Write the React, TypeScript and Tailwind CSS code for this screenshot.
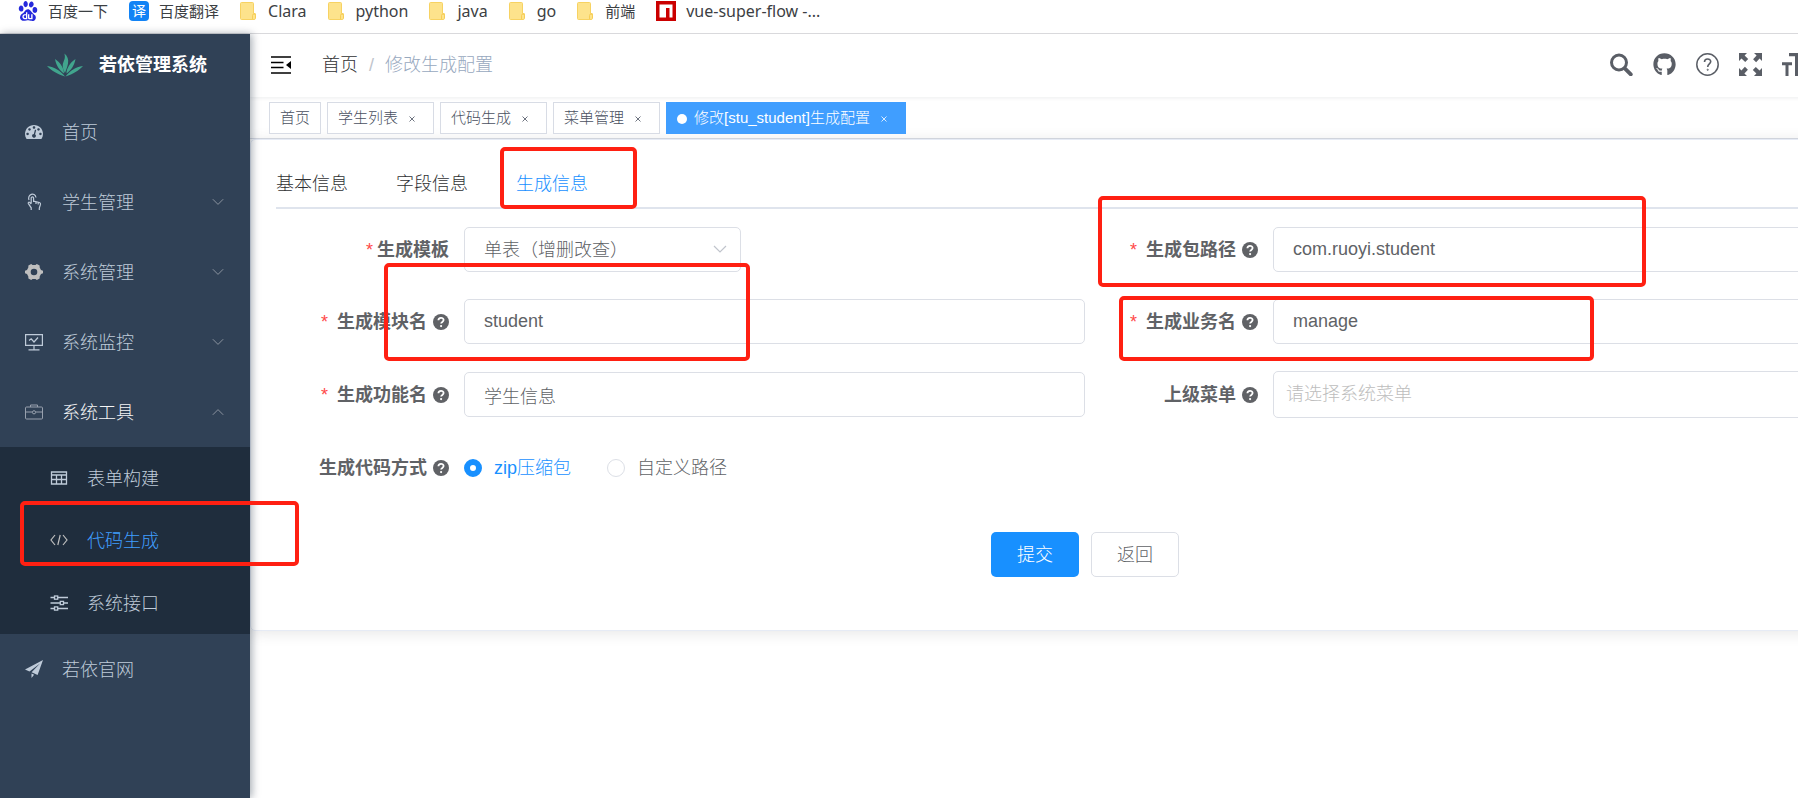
import { useState } from "react";
import type { ReactNode } from "react";
import { FaGithub } from "react-icons/fa";
import { SiBaidu } from "react-icons/si";

type IconProps = { className?: string };

const bookmarks = [
  { name: "百度一下", icon: "baidu" },
  { name: "百度翻译", icon: "fanyi" },
  { name: "Clara", icon: "folder" },
  { name: "python", icon: "folder" },
  { name: "java", icon: "folder" },
  { name: "go", icon: "folder" },
  { name: "前端", icon: "folder" },
  { name: "vue-super-flow -...", icon: "npm" },
];

const tags = ["首页", "学生列表", "代码生成", "菜单管理", "修改[stu_student]生成配置"];

const BookmarkIcon = ({ type }: { type: string }) => {
  if (type === "baidu") {
    return <SiBaidu className="h-5 w-5 text-[#2529dc]" />;
  }
  if (type === "fanyi") {
    return (
      <span className="flex h-5 w-5 items-center justify-center rounded-sm bg-[#1283f5] text-sm leading-none text-white">译</span>
    );
  }
  if (type === "npm") {
    return (
      <svg viewBox="0 0 20 20" className="h-5 w-5">
        <path fill="#cb0000" d="M0 0h20v20H0z" />
        <path fill="#fff" d="M3.500 3.500h13v13h-3V7h-3.500v9.500H3.500z" />
      </svg>
    );
  }
  return (
    <svg viewBox="0 0 18 18" className="h-[18px] w-[18px]">
      <path fill="#fde38c" stroke="#f7d262" d="M1.500.5h11a1 1 0 0 1 1 1v10h1.500a.5.5 0 0 1 .5.5v4a1.500 1.500 0 0 1-1.500 1.500H1.500a1 1 0 0 1-1-1v-15a1 1 0 0 1 1-1z" />
      <path fill="#fde38c" stroke="#f7cd55" d="M12.500 17v-3.500a1.500 1.500 0 0 1 3 0V16" />
    </svg>
  );
};

const Lotus = () => (
  <svg viewBox="0 0 36 24" className="h-6 w-9" fill="#41a58d">
    <path d="M18 20c-2.500-4-3.200-8-1.200-12C18.300 5 18 3 17.400.500 20.500 3 21.800 6.500 21 10.500 20.400 14 19 17 18 20z" />
    <path d="M17 20.500c0-5-3.500-11-9-14.500 1 6 4.500 11.500 9 14.500zM19.500 20.500c0-5 3.500-11 9-14.500-1 6-4.500 11.500-9 14.500z" />
    <path d="M18 23.500C13 17.500 8 14 0 13c4.500 4.500 10 8 18 10.500zM18.500 23.500c5-6 9.500-9.500 17.500-10.500-4.500 4.500-9.500 8-17.500 10.500z" />
  </svg>
);

const DashboardIcon = ({ className }: IconProps) => (
  <svg viewBox="0 0 128 100" className={className} fill="currentColor">
    <path d="M27.429 63.638c0-2.508-.893-4.654-2.679-6.440-1.786-1.786-3.930-2.680-6.428-2.680s-4.642.894-6.428 2.680-2.679 3.932-2.679 6.440c0 2.509.893 4.655 2.679 6.440 1.786 1.787 3.930 2.680 6.428 2.680s4.642-.893 6.428-2.680 2.679-3.931 2.679-6.440zm13.714-31.801c0-2.508-.893-4.654-2.679-6.440s-3.930-2.680-6.428-2.680-4.642.894-6.428 2.680-2.679 3.932-2.679 6.440c0 2.509.893 4.655 2.679 6.440 1.786 1.787 3.930 2.680 6.428 2.680s4.642-.893 6.428-2.680 2.679-3.931 2.679-6.440zM71.714 65.980l7.215-27.116c.285-1.230.107-2.378-.536-3.443-.643-1.064-1.560-1.762-2.750-2.094s-2.333-.177-3.429.462-1.810 1.573-2.143 2.804l-7.214 27.116c-2.857.237-5.405 1.266-7.643 3.088-2.238 1.822-3.738 4.152-4.500 6.992-.952 3.644-.476 7.098 1.429 10.364 1.905 3.265 4.690 5.370 8.357 6.317s7.143.474 10.429-1.420 5.404-4.660 6.357-8.306c.762-2.840.619-5.607-.429-8.305-1.047-2.697-2.762-4.850-5.143-6.460zm47.143-2.342c0-2.508-.893-4.654-2.679-6.440s-3.930-2.680-6.428-2.680-4.642.894-6.428 2.680-2.679 3.932-2.679 6.440c0 2.509.893 4.655 2.679 6.440 1.786 1.787 3.930 2.680 6.428 2.680s4.642-.893 6.428-2.680 2.679-3.931 2.679-6.440zM73.143 18.180c0-2.508-.893-4.654-2.679-6.440S66.534 9.060 64.036 9.060s-4.642.894-6.428 2.680-2.679 3.932-2.679 6.440.893 4.655 2.679 6.440c1.786 1.787 3.930 2.680 6.428 2.680s4.642-.893 6.428-2.680 2.679-3.931 2.679-6.440zm32 13.657c0-2.508-.893-4.654-2.679-6.440s-3.930-2.680-6.428-2.680-4.642.894-6.428 2.680-2.679 3.932-2.679 6.440c0 2.509.893 4.655 2.679 6.440 1.786 1.787 3.930 2.680 6.428 2.680s4.642-.893 6.428-2.680 2.679-3.931 2.679-6.440zM128 63.638c0 12.351-3.357 23.780-10.072 34.290C117.024 99.310 115.738 100 114.071 100H13.929c-1.667 0-2.953-.69-3.858-2.072C3.357 87.465 0 76.036 0 63.638c0-8.620 1.690-16.855 5.071-24.704S13 24.270 18.750 18.550s12.500-10.400 20.250-13.800S55.333 0 64 0s17.250 1.350 25 4.750 14.500 8.080 20.250 13.800 10.298 12.535 13.679 20.384S128 55.018 128 63.638z" />
  </svg>
);

const TouchIcon = ({ className }: IconProps) => (
  <svg viewBox="0 0 18 18" className={className} fill="none" stroke="currentColor" strokeWidth="1.200">
    <path d="M4 7C1.800 1.500 9.800-1.500 11 4.500M6.200 10.500V5c0-1.600 2.400-1.600 2.400 0v4M6.200 11 4.700 9.400c-.9-.7-1.900.2-1.300 1.200l2.800 4.200V17M8.600 8.200l5.800 1.300c.9.300 1.300.9 1.100 1.900l-1.200 3.600v2M11 9v2M13.200 9.500v2" />
  </svg>
);

const GearIcon = ({ className }: IconProps) => (
  <svg viewBox="0 0 18 17" className={className} fill="#bfbfbf">
    <path fillRule="evenodd" d="M6.200.5 7.500 1.500h3L11.800.5 14.600 2l.1 2L16 6.400l2 .8v2.600l-2 .8-1.300 2.400-.1 2-2.800 1.500-1.300-1h-3l-1.300 1L3.400 15l-.1-2L2 10.600 0 9.800V7.200l2-.8L3.300 4l.1-2zM9 5.200a3.300 3.300 0 1 0 0 6.600 3.300 3.300 0 0 0 0-6.600z" />
  </svg>
);

const MonitorIcon = ({ className }: IconProps) => (
  <svg viewBox="0 0 18 18" className={className} fill="none" stroke="currentColor" strokeWidth="1.200">
    <path d="M.6 1.600h16.800v10.800H.6zM9 12.400v4.200M3.500 16.800h11M4 7.500l2.200-1.700L9 9l4-4.500" />
  </svg>
);

const ToolIcon = ({ className }: IconProps) => (
  <svg viewBox="0 0 18 18" className={className} fill="none" stroke="#98a1ae" strokeWidth="1">
    <rect x=".5" y="4" width="17" height="12" rx="1" />
    <path d="M5.500 4V2h7v2M.5 9h6.700M10.800 9h6.700" />
    <circle cx="9" cy="9.300" r="1.600" />
  </svg>
);

const BuildIcon = ({ className }: IconProps) => (
  <svg viewBox="0 0 18 18" className={className} fill="none" stroke="currentColor" strokeWidth="1.300">
    <path d="M1.500 3h15v12h-15zM1.500 6h15M1.500 10.500h15M6.500 6v9M11.500 6v9" />
  </svg>
);

const CodeIcon = ({ className }: IconProps) => (
  <svg viewBox="0 0 18 18" className={className} fill="none" stroke="#bfbfbf" strokeWidth="1.200">
    <path d="M5 4 1 9l4 5M13 4l4 5-4 5M10.200 4 7.800 14" />
  </svg>
);

const SwaggerIcon = ({ className }: IconProps) => (
  <svg viewBox="0 0 18 18" className={className} fill="none" stroke="currentColor" strokeWidth="1.300">
    <path d="M.5 3.500h4M8 3.500h10M.5 9H10M14 9h4M.5 14.500h4M8 14.500h10" />
    <rect x="4.500" y="2" width="3.200" height="3.200" />
    <rect x="10.300" y="7.400" width="3.200" height="3.200" />
    <rect x="4.500" y="12.900" width="3.200" height="3.200" />
  </svg>
);

const GuideIcon = ({ className }: IconProps) => (
  <svg viewBox="0 0 18 18" className={className} fill="currentColor">
    <path d="M18 0 0 9.600l4.500 1.800L15 3.500 6.600 12.300l6 2.600zM6.500 13.600V18l2.600-3.200z" />
  </svg>
);

const HelpIcon = () => (
  <svg viewBox="0 0 16 16" className="ml-[6px] h-4 w-4">
    <circle cx="8" cy="8" r="8" fill="currentColor" />
    <path d="M5.400 6.300c0-3.300 5.200-3.300 5.200-.2 0 1.800-2.500 1.800-2.500 3.500" fill="none" stroke="#fff" strokeWidth="1.800" />
    <circle cx="8.100" cy="12.100" r="1.100" fill="#fff" />
  </svg>
);

const Chevron = ({ up }: { up?: boolean }) => (
  <svg viewBox="0 0 12 8" className={up ? "h-2 w-3 rotate-180" : "h-2 w-3"} fill="none" stroke="#8b939f">
    <path d="M.8 1.200 6 6.400l5.200-5.200" />
  </svg>
);

const menus = [
  { name: "首页", Icon: DashboardIcon, arrow: false, open: false },
  { name: "学生管理", Icon: TouchIcon, arrow: true, open: false },
  { name: "系统管理", Icon: GearIcon, arrow: true, open: false },
  { name: "系统监控", Icon: MonitorIcon, arrow: true, open: false },
  { name: "系统工具", Icon: ToolIcon, arrow: true, open: true },
];

const subMenus = [
  { name: "表单构建", Icon: BuildIcon, active: false },
  { name: "代码生成", Icon: CodeIcon, active: true },
  { name: "系统接口", Icon: SwaggerIcon, active: false },
];

const Sidebar = () => (
  <aside className="relative z-10 w-[250px] shrink-0 bg-[#304156] text-lg text-[#bfcbd9] shadow-[2px_0_8px_rgba(0,21,41,0.35)]">
    <a href="#" className="flex h-[63px] items-center pb-[2px] pl-[47px]">
      <Lotus />
      <h1 className="ml-4 text-lg font-bold text-white">若依管理系统</h1>
    </a>
    <nav>
      {menus.map(({ name, Icon, arrow, open }) => (
        <a key={name} href="#" className="flex h-[70px] items-center pr-[26px] pl-[25px]">
          <Icon className="h-[18px] w-[18px]" />
          <span className={open ? "ml-[19px] flex-1 pt-[2px] text-[#f4f4f5]" : "ml-[19px] flex-1 pt-[2px]"}>{name}</span>
          {arrow && <Chevron up={open} />}
        </a>
      ))}
      <div className="grid h-[187px] grid-rows-3 bg-[#1f2d3d]">
        {subMenus.map(({ name, Icon, active }) => (
          <a key={name} href="#" className="flex items-center pl-[50px]">
            <Icon className="h-[18px] w-[18px]" />
            <span className={active ? "ml-[19px] pt-[2px] text-[#409eff]" : "ml-[19px] pt-[2px]"}>{name}</span>
          </a>
        ))}
      </div>
      <a href="#" className="flex h-[70px] items-center pl-[25px]">
        <GuideIcon className="h-[18px] w-[18px]" />
        <span className="ml-[19px] pt-[2px]">若依官网</span>
      </a>
    </nav>
  </aside>
);

const Navbar = () => (
  <header className="relative flex h-[63px] items-center bg-white pb-[2px] pl-[21px] shadow-[0_1px_4px_rgba(0,21,41,0.08)]">
    <button type="button" aria-label="menu">
      <svg viewBox="0 0 20 18" className="h-[18px] w-5">
        <path d="M0 1h20M0 6.500h12.500M0 11.500h12.500M0 17h20" stroke="#000" strokeWidth="1.700" />
        <path d="M20 5v8l-5-4z" />
      </svg>
    </button>
    <nav className="ml-[31px] flex items-center gap-[11px] text-lg">
      <a href="#" className="text-[#303133]">首页</a>
      <span className="text-[#c0c4cc]">/</span>
      <span className="text-[#97a8be]">修改生成配置</span>
    </nav>
  </header>
);

const NavIcons = () => (
  <div className="absolute top-0 right-[-7px] flex h-[61px] items-center gap-5 text-[#5a5e66]">
    <button type="button" aria-label="search">
      <svg viewBox="0 0 23 23" className="h-[23px] w-[23px]" fill="none" stroke="currentColor">
        <circle cx="9" cy="9.500" r="7.500" strokeWidth="3" />
        <path d="m14.800 15.300 6 6" strokeWidth="3.800" strokeLinecap="round" />
      </svg>
    </button>
    <a href="#" aria-label="github"><FaGithub className="h-[23px] w-[23px]" /></a>
    <a href="#" aria-label="doc">
      <svg viewBox="0 0 23 23" className="h-[23px] w-[23px]" fill="none" stroke="currentColor">
        <circle cx="11.500" cy="11.500" r="10.700" strokeWidth="1.500" />
        <path d="M8.500 9c0-4 6.200-4 6.200-.4 0 2.400-3 2.300-3 5.400" strokeWidth="1.600" />
        <circle cx="11.700" cy="16.800" r=".6" />
      </svg>
    </a>
    <button type="button" aria-label="fullscreen">
      <svg viewBox="0 0 23 23" className="h-[23px] w-[23px]" fill="currentColor">
        <path d="M0 0h8L5.600 2.400l3.600 3.500-3 3-3.700-3.500L0 8z" />
        <path transform="rotate(90 11.500 11.500)" d="M0 0h8L5.600 2.400l3.600 3.500-3 3-3.700-3.500L0 8z" />
        <path transform="rotate(180 11.500 11.500)" d="M0 0h8L5.600 2.400l3.600 3.500-3 3-3.700-3.500L0 8z" />
        <path transform="rotate(270 11.500 11.500)" d="M0 0h8L5.600 2.400l3.600 3.500-3 3-3.700-3.500L0 8z" />
      </svg>
    </button>
    <button type="button" aria-label="size">
      <svg viewBox="0 0 23 23" className="h-[23px] w-[23px]" fill="currentColor">
        <path d="M7 0h16v3.300h-5.500V23h-4.500V3.300H7zM0 9.300h10v3H6.500V23h-3V12.300H0z" />
      </svg>
    </button>
  </div>
);

const TagsView = () => (
  <div className="flex h-[42px] items-center gap-[6px] border-b border-[#d8dce5] bg-white pl-[19px] text-[15px]">
    {tags.map((tag, i) => {
      const active = i === tags.length - 1;
      return (
        <a
          key={tag}
          href="#"
          className={
            active
              ? "flex h-8 items-center border border-[#409eff] bg-[#409eff] px-[10px] pt-[2px] text-white"
              : "flex h-8 items-center border border-[#d8dce5] bg-white px-[10px] pt-[2px] text-[#495060]"
          }
        >
          {active && <span className="mr-[7px] h-[10px] w-[10px] rounded-full bg-white" />}
          {tag}
          {i > 0 && (
            <svg viewBox="0 0 6 6" className="mr-2 ml-[11px] h-[6px] w-[6px]" stroke="currentColor" strokeWidth=".8">
              <path d="m.5.5 5 5M5.500.5l-5 5" />
            </svg>
          )}
        </a>
      );
    })}
  </div>
);

type FieldProps = { label: string; id: string; required?: boolean; help?: boolean; children: ReactNode };

const Field = ({ label, id, required, help, children }: FieldProps) => (
  <div className="flex min-h-[45px] items-center">
    <label htmlFor={id} className="flex w-[188px] shrink-0 items-center justify-end pr-[15px] font-bold">
      {required && <span className={help ? "mr-[9px] font-normal text-[#ff4949]" : "mr-1 font-normal text-[#ff4949]"}>*</span>}
      {label}
      {help && <HelpIcon />}
    </label>
    {children}
  </div>
);

const inputClass = "h-[45px] w-full rounded-[5px] border border-[#dcdfe6] bg-white px-[19px] text-[#606266] outline-none";

const GenForm = () => {
  const [type, setType] = useState("zip");

  return (
    <form className="pt-[18px] text-lg text-[#606266]">
      <div className="grid grid-cols-2 gap-y-[27px]">
        <Field label="生成模板" id="tpl" required>
          <div className="relative w-[277px]">
            <select id="tpl" className={`${inputClass} appearance-none`}>
              <option>单表（增删改查）</option>
            </select>
            <svg viewBox="0 0 14 9" className="pointer-events-none absolute top-[18px] right-[14px] h-[9px] w-[14px]" fill="none" stroke="#c0c4cc" strokeWidth="1.200">
              <path d="m1 1 6 6 6-6" />
            </svg>
          </div>
        </Field>
        <Field label="生成包路径" id="pkg" required help>
          <input id="pkg" className={inputClass} defaultValue="com.ruoyi.student" />
        </Field>
        <Field label="生成模块名" id="module" required help>
          <input id="module" className={inputClass} defaultValue="student" />
        </Field>
        <Field label="生成业务名" id="business" required help>
          <input id="business" className={inputClass} defaultValue="manage" />
        </Field>
        <Field label="生成功能名" id="func" required help>
          <input id="func" className={inputClass} defaultValue="学生信息" />
        </Field>
        <Field label="上级菜单" id="parent" help>
          <input
            id="parent"
            className="h-[47px] w-full rounded-[5px] border border-[#dcdfe6] px-3 outline-none placeholder:text-[#bdbdbd]"
            placeholder="请选择系统菜单"
          />
        </Field>
        <Field label="生成代码方式" id="zip" help>
          <div className="flex items-center">
            <input
              id="zip"
              type="radio"
              name="genType"
              checked={type === "zip"}
              onChange={() => setType("zip")}
              className="h-[18px] w-[18px] appearance-none rounded-full border border-[#dcdfe6] checked:border-[6px] checked:border-[#1890ff]"
            />
            <label htmlFor="zip" className="ml-3 text-[#1890ff]">zip压缩包</label>
            <input
              id="custom"
              type="radio"
              name="genType"
              checked={type === "custom"}
              onChange={() => setType("custom")}
              className="ml-9 h-[18px] w-[18px] appearance-none rounded-full border border-[#dcdfe6] checked:border-[6px] checked:border-[#1890ff]"
            />
            <label htmlFor="custom" className="ml-3">自定义路径</label>
          </div>
        </Field>
      </div>
      <div className="mt-[42px] flex justify-center gap-3">
        <button type="button" className="h-[45px] w-[88px] rounded-[5px] bg-[#1890ff] text-white">提交</button>
        <button type="button" className="h-[45px] w-[88px] rounded-[5px] border border-[#dcdfe6] bg-white">返回</button>
      </div>
    </form>
  );
};

const Mark = ({ className }: { className: string }) => (
  <div className={`pointer-events-none absolute z-20 rounded-[5px] border-4 border-[#ff2012] ${className}`} />
);

const App = () => {
  return (
    <div className="relative flex h-screen flex-col overflow-hidden bg-white font-['Liberation_Sans','Noto_Sans_CJK_SC',sans-serif] font-light">
      <div className="flex h-[34px] shrink-0 items-start border-b border-[#d9d9dc] pl-[18px] font-['Noto_Sans','Noto_Sans_CJK_SC',sans-serif] leading-[22px] font-normal text-[#3c4043]">
        {bookmarks.map((b) => (
          <a
            key={b.name}
            href="#"
            className={/^[a-z]/i.test(b.name) ? "mr-[21px] flex items-center gap-[10px] text-base leading-[22px]" : "mr-[21px] flex items-center gap-[10px] text-[15px] leading-[22px]"}
          >
            <BookmarkIcon type={b.icon} />
            {b.name}
          </a>
        ))}
      </div>

      <div className="flex min-h-0 flex-1">
        <Sidebar />
        <div className="relative min-w-0 flex-1 overflow-hidden">
          <div className="min-w-[1670px]">
            <Navbar />
            <TagsView />
            <main className="rounded-[5px] border border-[#e6ebf5] px-[25px] pb-[53px] shadow-[0_2px_15px_rgba(0,0,0,0.1)]">
              <div role="tablist" className="flex h-[69px] gap-12 border-b-2 border-[#dfe4ed] pt-[18px] text-lg text-[#303133]">
                <button type="button" role="tab" className="h-[51px]">基本信息</button>
                <button type="button" role="tab" className="h-[51px]">字段信息</button>
                <button type="button" role="tab" aria-selected="true" className="h-[51px] border-b-2 border-[#1890ff] pt-[2px] text-[#1890ff]">生成信息</button>
              </div>
              <GenForm />
            </main>
          </div>
          <NavIcons />
        </div>
      </div>

      <Mark className="top-[147px] left-[500px] h-[62px] w-[137px]" />
      <Mark className="top-[263px] left-[384px] h-[98px] w-[366px]" />
      <Mark className="top-[196px] left-[1098px] h-[91px] w-[548px]" />
      <Mark className="top-[296px] left-[1119px] h-[65px] w-[475px]" />
      <Mark className="top-[501px] left-[20px] h-[65px] w-[279px]" />
    </div>
  );
};

export default App;
